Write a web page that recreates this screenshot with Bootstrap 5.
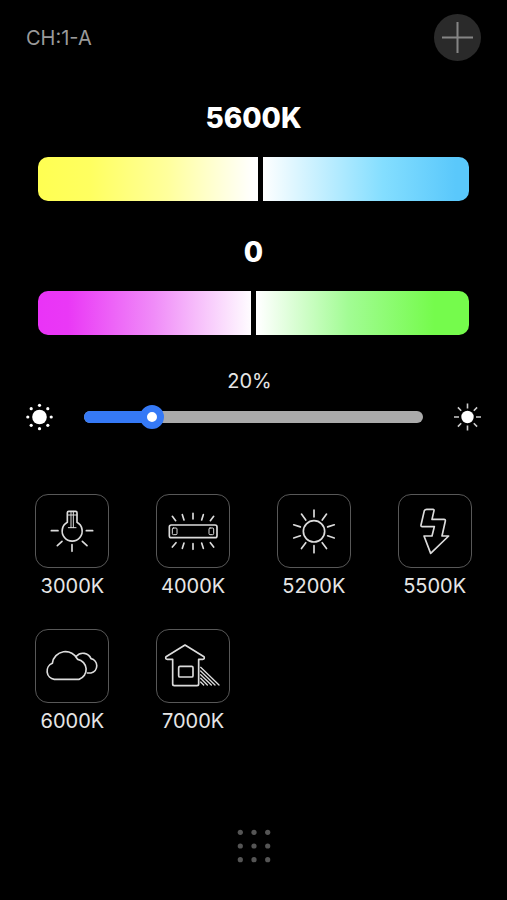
<!DOCTYPE html>
<html lang="en" data-bs-theme="dark">
<head>
<meta charset="utf-8">
<meta name="viewport" content="width=device-width, initial-scale=1">
<title>Light control</title>
<link href="https://cdn.jsdelivr.net/npm/bootstrap@5.3.0/dist/css/bootstrap.min.css" rel="stylesheet">
<style>
  body { background: #000; color: #e6e6e6; font-family: Inter, "Liberation Sans", sans-serif; font-size: 20px; line-height: 24px; }
  .topbar { padding: 14px 26px 0; }
  .channel { color: #9a9a9a; }
  .add-btn { width: 47px; height: 47px; background: #2a2a2a; color: #858585; }
  .panel { padding: 41px 38px 0; }
  .value { font-size: 28px; line-height: 32px; font-weight: 800; color: #fff; }
  .tint-block { margin-top: 35px; }
  input[type=range] { -webkit-appearance: none; appearance: none; display: block; width: 100%; margin: 0; background: none; }
  .spectrum { height: 44px; margin-top: 23px !important; border-radius: 10px; overflow: hidden; }
  .spectrum-temp { background: linear-gradient(90deg, #ffff52 0%, #ffff60 12%, #ffff9c 30%, #fff 50%, #fff 52%, #84deff 80%, #5ac8fb 97%) !important; }
  .spectrum-tint { background: linear-gradient(90deg, #ea33f7 0%, #ea38f6 7%, #f08cf8 27%, #fff 50%, #fff 51%, #a2fc94 72%, #75fb4c 92%) !important; }
  .spectrum::-webkit-slider-runnable-track { height: 44px; }
  .spectrum::-webkit-slider-thumb { -webkit-appearance: none; width: 5px; height: 44px; background: #000; }
  .dimmer { padding: 34px 24px 0; }
  .dimmer-row { margin-top: 9px; gap: 17px; }
  .slider { display: grid; align-items: center; }
  .slider > * { grid-area: 1 / 1; }
  .slider .progress { height: 12px; margin: 0 12px; border-radius: 6px; background: #ababab; }
  .slider .progress-bar { background: #3579f6; }
  .slider input { height: 24px; }
  .slider input::-webkit-slider-thumb { -webkit-appearance: none; width: 24px; height: 24px; border: 7px solid #3579f6; border-radius: 50%; background: #fff; }
  .presets { padding: 62px 12px 0; row-gap: 31px; }
  .preset { color: #e6e6e6; gap: 6px; font-size: 20px; line-height: 24px; }
  .tile { width: 74px; height: 74px; border: 1px solid #585858; border-radius: 13px; }
  .tile svg { width: 100%; height: 100%; fill: none; stroke: #dcdcdc; stroke-width: 5; stroke-linecap: round; stroke-linejoin: round; }
  .dots { padding-bottom: 37px; color: #555; }
</style>
<script src="https://cdn.jsdelivr.net/npm/bootstrap@5.3.0/dist/js/bootstrap.bundle.min.js"></script>
</head>
<body>
<div class="d-flex flex-column min-vh-100">
  <header class="topbar d-flex justify-content-between align-items-center">
    <span class="channel">CH:1-A</span>
    <button type="button" class="add-btn btn p-0 border-0 rounded-circle d-flex align-items-center justify-content-center" aria-label="Add">
      <svg width="31" height="31" viewBox="0 0 31 31" fill="none" stroke="currentColor" stroke-width="2" aria-hidden="true"><path d="M15.500 0V31M0 15.500H31"/></svg>
    </button>
  </header>

  <main>
    <section class="panel text-center">
      <label class="value d-block" for="temp">5600K</label>
      <input class="spectrum spectrum-temp" type="range" id="temp" min="2500" max="8500" step="100" value="5600">
      <label class="value tint-block d-block" for="tint">0</label>
      <input class="spectrum spectrum-tint" type="range" id="tint" min="-50" max="50" value="0">
    </section>

    <section class="dimmer">
      <label class="d-block text-center pe-2" for="level">20%</label>
      <div class="dimmer-row d-flex align-items-center">
        <svg class="flex-shrink-0" width="31" height="30" viewBox="-15.500 -15 31 30" fill="#fff" aria-hidden="true">
          <circle r="7.300"/>
          <circle cx="0" cy="-11.700" r="1.600"/><circle cx="0" cy="11.700" r="1.600"/><circle cx="-11.700" cy="0" r="1.600"/><circle cx="11.700" cy="0" r="1.600"/>
          <circle cx="-8.300" cy="-8.300" r="1.600"/><circle cx="8.300" cy="-8.300" r="1.600"/><circle cx="-8.300" cy="8.300" r="1.600"/><circle cx="8.300" cy="8.300" r="1.600"/>
        </svg>
        <div class="slider flex-grow-1">
          <div class="progress"><div class="progress-bar" style="width:20%"></div></div>
          <input type="range" id="level" min="0" max="100" value="20">
        </div>
        <svg class="flex-shrink-0" width="31" height="30" viewBox="-15.500 -15 31 30" aria-hidden="true">
          <circle r="6.200" fill="#fff"/>
          <path d="M0-8.500V-13.500M0 8.500V13.500M-8.500 0H-13.500M8.500 0H13.500M-6.300-6.300L-9.600-9.600M6.300-6.300L9.600-9.600M-6.300 6.300L-9.600 9.600M6.300 6.300L9.600 9.600" stroke="#ccc" stroke-width="1.600"/>
        </svg>
      </div>
    </section>

    <section class="presets row row-cols-4 g-0">
      <div class="col"><button type="button" class="preset btn p-0 border-0 d-flex flex-column align-items-center w-100">
        <span class="tile"><svg class="d-block" viewBox="3 3 216 216" aria-hidden="true"><path d="M97 85V56q0-4 4-4H122q4 0 4 4V85A30 30 0 1 1 97 85z"/><path stroke-width="3" d="M98 63H126M108 52V101M115 52V101M100 101H123"/><path d="M49 110H69M154 110H173M81 142L67 155M142 142L156 155M111 152V172"/></svg></span>
        <span>3000K</span></button></div>
      <div class="col"><button type="button" class="preset btn p-0 border-0 d-flex flex-column align-items-center w-100">
        <span class="tile"><svg class="d-block" viewBox="3 3 216 216" aria-hidden="true"><rect x="40" y="93" width="143" height="38" rx="6"/><rect x="49" y="102" width="14" height="20" rx="3" stroke-width="3"/><rect x="159" y="102" width="14" height="20" rx="3" stroke-width="3"/><path d="M49 67L59 80M79 62L84 78M111 58V75M142 62L137 78M173 67L163 80M60 146L49 159M84 147L79 163M111 149V166M137 147L142 163M163 146L173 159"/></svg></span>
        <span>4000K</span></button></div>
      <div class="col"><button type="button" class="preset btn p-0 border-0 d-flex flex-column align-items-center w-100">
        <span class="tile"><svg class="d-block" viewBox="3 3 216 216" aria-hidden="true"><circle cx="111" cy="112" r="32"/><path d="M111 48V69M111 155V176M135.700 78L148.600 60.200M151.900 98.700L171.900 92.200M151.900 125.300L171.900 131.800M135.700 146L148.600 163.800M86.300 146L73.400 163.800M70.100 125.300L50.100 131.800M70.100 98.700L50.100 92.200M86.300 78L73.400 60.200"/></svg></span>
        <span>5200K</span></button></div>
      <div class="col"><button type="button" class="preset btn p-0 border-0 d-flex flex-column align-items-center w-100">
        <span class="tile"><svg class="d-block" viewBox="3 3 216 216" aria-hidden="true"><path d="M86 46H105q4 0 3 4L102 76H138q5 0 4 5L132 126H152L98 178L78 126H102L109 98H73q-5 0-4-5L79 50q2-4 7-4z"/></svg></span>
        <span>5500K</span></button></div>
      <div class="col"><button type="button" class="preset btn p-0 border-0 d-flex flex-column align-items-center w-100">
        <span class="tile"><svg class="d-block" viewBox="3 3 216 216" aria-hidden="true"><path d="M58 151A25 25 0 0 1 52 103A40 40 0 0 1 128 91A31 31 0 0 1 132 151z"/><path d="M124 82A26 26 0 0 1 168 89A22 22 0 0 1 168 132H157"/></svg></span>
        <span>6000K</span></button></div>
      <div class="col"><button type="button" class="preset btn p-0 border-0 d-flex flex-column align-items-center w-100">
        <span class="tile"><svg class="d-block" viewBox="3 3 216 216" aria-hidden="true"><path d="M87 48L144 83q3 8-4 8H128V165q0 5-5 5H55q-5 0-5-5V91H34q-7 0-4-8z"/><rect x="68" y="112" width="43" height="32" rx="4"/><path stroke-width="4" d="M134 115L189 168M134 126L177 168M134 137L166 168M134 148L154 168M134 159L143 168"/></svg></span>
        <span>7000K</span></button></div>
    </section>
  </main>

  <footer class="dots mt-auto d-flex justify-content-center">
    <svg width="34" height="34" viewBox="-17 -17 34 34" fill="currentColor" role="img" aria-label="Menu">
      <circle cx="-13.700" cy="-13.700" r="2.600"/><circle cx="0" cy="-13.700" r="2.600"/><circle cx="13.700" cy="-13.700" r="2.600"/>
      <circle cx="-13.700" cy="0" r="2.600"/><circle cx="0" cy="0" r="2.600"/><circle cx="13.700" cy="0" r="2.600"/>
      <circle cx="-13.700" cy="13.700" r="2.600"/><circle cx="0" cy="13.700" r="2.600"/><circle cx="13.700" cy="13.700" r="2.600"/>
    </svg>
  </footer>
</div>
</body>
</html>
